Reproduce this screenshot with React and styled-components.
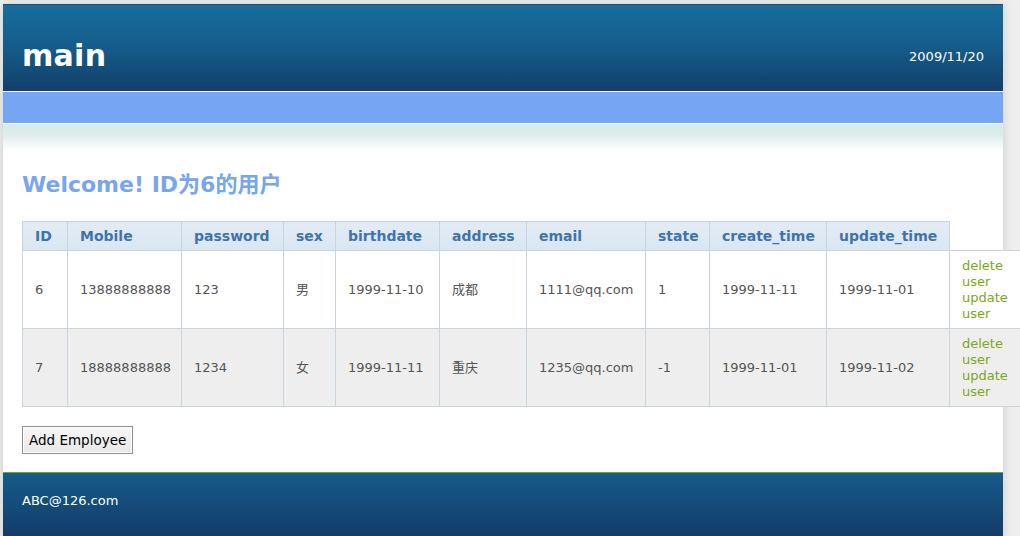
import styled, { createGlobalStyle } from 'styled-components'

const GlobalStyle = createGlobalStyle`
  html, body {
    margin: 0;
    padding: 0;
    overflow: hidden;
    background: #efefef;
    font-family: 'DejaVu Sans', Verdana, 'Noto Sans CJK SC', sans-serif;
  }
`

const users = [
  { id: 6, mobile: '13888888888', password: '123', sex: '男', birthdate: '1999-11-10', address: '成都', email: '1111@qq.com', state: '1', create: '1999-11-11', update: '1999-11-01' },
  { id: 7, mobile: '18888888888', password: '1234', sex: '女', birthdate: '1999-11-11', address: '重庆', email: '1235@qq.com', state: '-1', create: '1999-11-01', update: '1999-11-02' },
]

const columns = [
  ['ID', 45], ['Mobile', 114], ['password', 102], ['sex', 52], ['birthdate', 104],
  ['address', 87], ['email', 119], ['state', 64], ['create_time', 117], ['update_time', 123],
]

const App = () => {
  return (
    <>
      <GlobalStyle />
      <Page>
        <Header>
          <Title>main</Title>
          <DateText>2009/11/20</DateText>
        </Header>
        <NavBar />
        <Band />
        <Content>
          <Welcome>Welcome! ID为6的用户</Welcome>
          <Table>
            <colgroup>
              {columns.map(([name, w]) => <col key={name} style={{ width: w }} />)}
              <col style={{ width: 74 }} />
            </colgroup>
            <thead>
              <tr>
                {columns.map(([name]) => <Th key={name}>{name}</Th>)}
              </tr>
            </thead>
            <tbody>
              {users.map((u, i) => (
                <Row key={u.id} $odd={i % 2 === 1}>
                  <Td>{u.id}</Td>
                  <Td>{u.mobile}</Td>
                  <Td>{u.password}</Td>
                  <Td>{u.sex}</Td>
                  <Td>{u.birthdate}</Td>
                  <Td>{u.address}</Td>
                  <Td>{u.email}</Td>
                  <Td>{u.state}</Td>
                  <Td>{u.create}</Td>
                  <Td>{u.update}</Td>
                  <ActionTd>
                    <ActionLink href="#">delete user</ActionLink>{' '}
                    <ActionLink href="#">update user</ActionLink>
                  </ActionTd>
                </Row>
              ))}
            </tbody>
          </Table>
          <AddButton type="button">Add Employee</AddButton>
        </Content>
        <Footer>ABC@126.com</Footer>
      </Page>
    </>
  )
}

export default App

const Page = styled.div`
  width: 1000px;
  margin: 4px 0 0 3px;
  background: #fff;
  box-shadow: 0 0 10px rgba(60, 90, 60, 0.22);
  min-height: 540px;
`

const Header = styled.div`
  box-sizing: border-box;
  height: 87px;
  border-top: 1px solid #1b4e79;
  background: linear-gradient(#166d9b 0%, #155e8c 45%, #133f6b 100%);
  display: flex;
  align-items: center;
  justify-content: space-between;
  padding: 14px 19px 0 19px;
`

const Title = styled.h1`
  margin: 0;
  color: #fff;
  font-size: 30px;
  font-weight: bold;
  letter-spacing: 0.3px;
`

const DateText = styled.span`
  color: #fff;
  font-size: 13px;
  margin-top: 2px;
`

const NavBar = styled.div`
  height: 31px;
  border-top: 1px solid #fff;
  border-bottom: 1px solid #fff;
  background: #76a6f3;
`

const Band = styled.div`
  height: 26px;
  background: linear-gradient(#d8ebe8 0%, #dcecea 40%, #fff 100%);
`

const Content = styled.div`
  padding: 20px 19px 18px;
`

const Welcome = styled.h2`
  margin: 0 0 21px;
  color: #77a6ee;
  font-size: 22px;
  font-weight: bold;
  line-height: 30px;
`

const Table = styled.table`
  border-collapse: collapse;
  table-layout: fixed;
  width: 1001px;
`

const Th = styled.th`
  text-align: left;
  font-size: 14px;
  font-weight: bold;
  color: #3e74a9;
  padding: 6px 12px;
  line-height: 16px;
  background: linear-gradient(#e3ecf5, #d9e6f1);
  border: 1px solid #c9d4df;
  white-space: nowrap;
`

const Row = styled.tr`
  background: ${(p) => (p.$odd ? '#eeeeee' : '#fff')};
`

const Td = styled.td`
  font-size: 13px;
  color: #555;
  padding: 7px 12px;
  line-height: 16px;
  border: 1px solid #c9d4df;
  vertical-align: middle;
  white-space: nowrap;
`

const ActionTd = styled(Td)`
  white-space: normal;
  padding: 7px 14px 6px 12px;
`

const ActionLink = styled.a`
  color: #78a81c;
  text-decoration: none;
`

const AddButton = styled.button`
  margin-top: 19px;
  height: 28px;
  padding: 0 6px;
  font-family: 'DejaVu Sans', Verdana, sans-serif;
  font-size: 13.5px;
  color: #000;
  background: linear-gradient(#f7f7f7, #e8e8e8);
  border: 1px solid #8e8e8e;
  box-shadow: inset 0 0 0 1px #fff;
  border-radius: 0;
`

const Footer = styled.div`
  border-top: 1px solid #6aa81e;
  height: 64px;
  background: linear-gradient(#165b8a, #133c68);
  color: #fff;
  font-size: 13px;
  padding: 20px 19px 0;
  box-sizing: border-box;
`
